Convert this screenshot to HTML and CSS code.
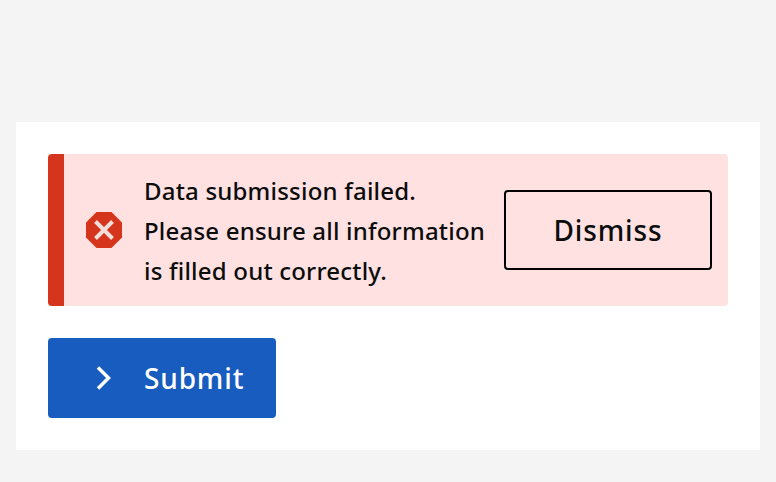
FILE: index.html
```html
<!DOCTYPE html>
<html>
<head>
    <meta charset="utf-8">
    <title>Form error</title>
    <link rel="stylesheet" href="styles.css">
</head>
<body>
    <div class="card">
        <div class="alert">
            <div class="alert-icon">
                <svg width="36" height="36" viewBox="0 0 36 36">
                    <polygon points="10.5,0 25.5,0 36,10.5 36,25.5 25.5,36 10.5,36 0,25.5 0,10.5" fill="#d4351c"/>
                    <path d="M9.5 9.5L26.5 26.5M26.5 9.5L9.5 26.5" stroke="#f6dedb" stroke-width="4" fill="none"/>
                </svg>
            </div>
            <div class="alert-text">
                <div>Data submission failed.</div>
                <div>Please ensure all information</div>
                <div>is filled out correctly.</div>
            </div>
            <button class="dismiss-btn">Dismiss</button>
        </div>
        <button class="submit-btn">
            <svg width="16" height="24" viewBox="0 0 16 24">
                <path d="M2 1.5L12.5 12L2 22.5" stroke="#fff" stroke-width="3.5" fill="none"/>
            </svg>
            <span>Submit</span>
        </button>
    </div>
</body>
</html>
```
FILE: styles.css
```css
html, body {
    margin: 0;
    padding: 0;
}
body {
    width: 776px;
    height: 482px;
    background: #f4f4f4;
    padding: 122px 16px 0;
    box-sizing: border-box;
    overflow: hidden;
    font-family: "Noto Sans", sans-serif;
    color: #0b0c0c;
}
.card {
    background: white;
    padding: 32px;
    height: 328px;
    box-sizing: border-box;
}
.alert {
    display: flex;
    align-items: center;
    height: 152px;
    box-sizing: border-box;
    background: #ffe1e1;
    border-left: 16px solid #d4351c;
    border-radius: 4px;
    padding-right: 16px;
    margin-bottom: 32px;
}
.alert-icon {
    display: flex;
    width: 36px;
    margin-left: 22px;
    margin-right: 22px;
}
.alert-text {
    flex: 1;
    padding-top: 2px;
    font-size: 24px;
    font-weight: 500;
    line-height: 40px;
    letter-spacing: 0.2px;
}
button {
    font-family: "Noto Sans", sans-serif;
    font-size: 28px;
    font-weight: 500;
    letter-spacing: 0.85px;
    border-radius: 4px;
    cursor: pointer;
}
.dismiss-btn {
    width: 208px;
    height: 80px;
    background: transparent;
    border: 2px solid #000;
    color: #0b0c0c;
}
.submit-btn {
    display: flex;
    align-items: center;
    width: 228px;
    height: 80px;
    padding: 0 0 0 48px;
    background: #175cbe;
    border: none;
    color: white;
}
.submit-btn span {
    margin-left: 32px;
}
```
